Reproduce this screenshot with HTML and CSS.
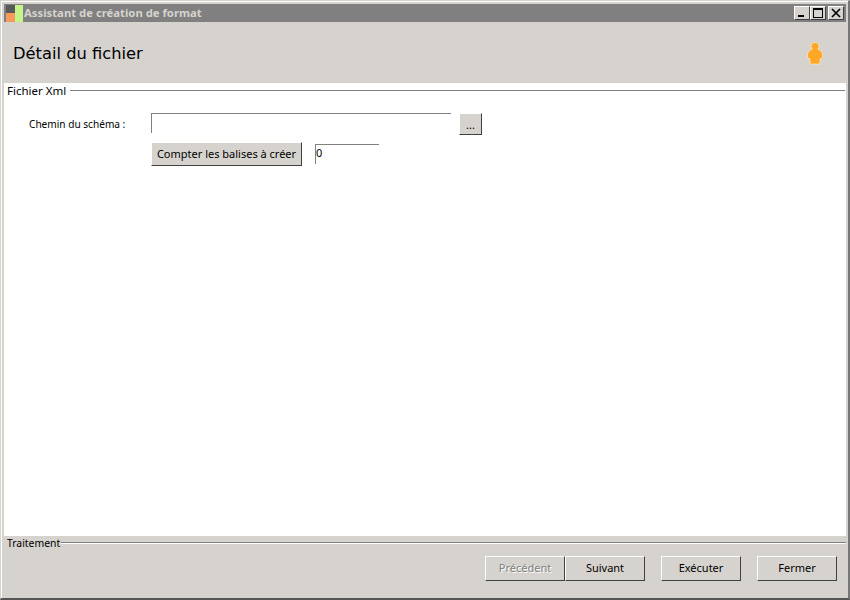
FILE: index.html
```html
<!DOCTYPE html>
<html lang="fr">
<head>
<meta charset="utf-8">
<title>Assistant de création de format</title>
<link rel="stylesheet" href="styles.css">
</head>
<body>
<div class="window">
  <div class="titlebar">
    <svg class="appicon" width="17" height="17" viewBox="0 0 17 17">
      <rect x="0" y="0" width="9" height="17" fill="#5a5a5a"/>
      <rect x="0" y="8" width="9" height="9" fill="#f79a5c"/>
      <rect x="9" y="0" width="8" height="17" fill="#c4f58a"/>
    </svg>
    <span class="titletext">Assistant de création de format</span>
    <div class="wincontrols">
      <button class="winbtn"><svg width="14" height="12" viewBox="0 0 14 12"><rect x="3" y="8" width="6" height="2" fill="#000"/></svg></button>
      <button class="winbtn"><svg width="14" height="12" viewBox="0 0 14 12"><rect x="2.500" y="2.500" width="9" height="8" fill="none" stroke="#000"/><rect x="2" y="1" width="10" height="2" fill="#000"/></svg></button>
      <button class="winbtn winclose"><svg width="14" height="12" viewBox="0 0 14 12"><path d="M3 2l8 8M11 2l-8 8" stroke="#000" stroke-width="1.700" fill="none"/></svg></button>
    </div>
  </div>
  <div class="header">
    <h1 class="heading">Détail du fichier</h1>
    <svg class="person" width="16" height="23" viewBox="0 0 16 23">
      <path d="M8 .5c2.300 0 4 1.700 4 3.800 0 1.200-.5 2.200-1.200 2.900 2.500.6 4.700 2.900 4.700 5.800v2.500l-2.500 1.500v5h-10v-5l-2.500-1.500v-2.500c0-2.900 2.200-5.200 4.700-5.800-.7-.7-1.200-1.700-1.200-2.900 0-2.100 1.700-3.800 4-3.800z" fill="#ffa726" stroke="#ffe9c0" stroke-width="0.700"/>
    </svg>
  </div>
  <main class="content">
    <div class="legend legend-top"><span>Fichier Xml</span><i class="rule"></i></div>
    <div class="formgrid">
      <label class="fieldlabel">Chemin du schéma :</label>
      <div class="row">
        <input class="field pathfield" type="text">
        <button class="btn browse">...</button>
      </div>
      <span></span>
      <div class="row row-count">
        <button class="btn count">Compter les balises à créer</button>
        <input class="field countfield" type="text" value="0">
      </div>
    </div>
  </main>
  <footer class="footer">
    <div class="legend legend-bottom"><span>Traitement</span><i class="rule"></i></div>
    <div class="actions">
      <button class="btn action" disabled>Précédent</button>
      <button class="btn action">Suivant</button>
      <button class="btn action spaced">Exécuter</button>
      <button class="btn action spaced">Fermer</button>
    </div>
  </footer>
</div>
</body>
</html>
```
FILE: styles.css
```css
* { box-sizing: border-box; }
html, body { margin: 0; padding: 0; height: 100%; }
body {
  width: 850px;
  height: 600px;
  overflow: hidden;
  font-family: "Noto Sans", "DejaVu Sans", sans-serif;
  font-size: 11px;
  color: #000;
  background: #d6d3ce;
}
.window {
  width: 850px;
  height: 600px;
  display: flex;
  flex-direction: column;
  background: #d6d3ce;
  border-top: 1px solid #d6d3ce;
  border-left: 1px solid #d6d3ce;
  border-right: 2px solid #777;
  border-bottom: 2px solid #555;
  box-shadow: inset 1px 1px 0 #fff;
  padding: 3px 2px 0 3px;
}
.titlebar {
  height: 18px;
  flex: none;
  display: flex;
  align-items: center;
  background: #808080;
  padding-left: 2px;
  padding-right: 2px;
}
.appicon { flex: none; margin-top: 1px; }
.titletext {
  margin-left: 1px;
  margin-bottom: 2px;
  font-weight: bold;
  font-size: 11.300px;
  color: #d6d3ce;
}
.wincontrols { margin-left: auto; display: flex; }
.winbtn {
  width: 16px;
  height: 14px;
  padding: 0;
  margin: 0;
  display: flex;
  align-items: center;
  justify-content: center;
  background: #d6d3ce;
  border: 1px solid;
  border-color: #fff #404040 #404040 #fff;
}
.winclose { margin-left: 2px; }
.header {
  height: 61px;
  flex: none;
  display: flex;
  align-items: center;
  justify-content: space-between;
  padding: 0 23px 0 9px;
}
.heading {
  margin: 1px 0 0;
  font-family: "DejaVu Sans", sans-serif;
  font-size: 16.300px;
  font-weight: normal;
}
.person { flex: none; margin-top: 2px; }
.content {
  flex: 1;
  background: #fff;
}
.legend {
  display: flex;
  align-items: center;
  white-space: nowrap;
}
.legend-top { height: 15px; padding-left: 3px; font-size: 11.500px; }
.legend-top .rule {
  flex: 1;
  margin-left: 4px;
  margin-right: 1px;
  height: 1px;
  background: #808080;
}
.legend-bottom { height: 14px; padding-left: 3px; font-size: 10.400px; align-items: flex-start; }
.legend-bottom .rule {
  flex: 1;
  height: 2px;
  margin: 6px 0 0 1px;
  background: #808080;
  border-bottom: 1px solid #fff;
}
.formgrid {
  display: grid;
  grid-template-columns: 122px 1fr;
  padding: 15px 0 0 25px;
  row-gap: 7px;
  align-items: center;
}
.fieldlabel { font-size: 10.100px; }
.row { display: flex; align-items: flex-start; }
.row-count { align-items: center; }
.field {
  border: 0;
  border-top: 1px solid #808080;
  border-left: 1px solid #808080;
  background: #fff;
  padding: 0 0 5px 0;
  margin: 0;
  font: inherit;
  color: #000;
  outline: none;
}
.pathfield { width: 300px; height: 20px; }
.countfield { width: 64px; height: 20px; margin-left: 13px; }
.btn {
  font: inherit;
  color: #000;
  background: #d6d3ce;
  border: 1px solid;
  border-color: #fff #404040 #404040 #fff;
  padding: 0;
  margin: 0;
}
.browse { width: 23px; height: 22px; margin-left: 8px; }
.count { width: 151px; height: 24px; padding-bottom: 2px; }
.footer {
  height: 62px;
  flex: none;
  display: flex;
  flex-direction: column;
}
.actions {
  display: flex;
  justify-content: flex-end;
  padding: 6px 9px 0 0;
}
.action { width: 80px; height: 25px; padding-bottom: 2px; }
.action:disabled { color: #808080; text-shadow: 1px 1px 0 #fff; }
.spaced { margin-left: 16px; }
```
